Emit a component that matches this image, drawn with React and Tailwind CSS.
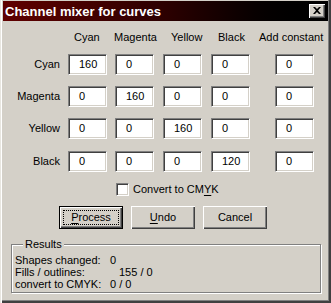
import React from "react";

const F = { fontFamily: '"Liberation Sans", Arial, sans-serif' };

function Field({ value, className = "" }) {
  return (
    <div
      className={
        "h-[21px] w-[39px] bg-white border border-t-[#808080] border-l-[#808080] border-b-white border-r-white shadow-[inset_1px_1px_0_#404040,inset_-1px_-1px_0_#d4d0c8] pl-[10px] flex items-center text-[11px] text-black leading-none " +
        className
      }
    >
      {value}
    </div>
  );
}

function Row({ label, values }) {
  return (
    <div className="flex items-center h-[21px]">
      <div className="w-[60px] text-right text-[11px] text-black leading-none">{label}</div>
      <Field value={values[0]} className="ml-[8px]" />
      <Field value={values[1]} className="ml-[8px]" />
      <Field value={values[2]} className="ml-[9px]" />
      <Field value={values[3]} className="ml-[9px]" />
      <Field value={values[4]} className="ml-[25px]" />
    </div>
  );
}

function Btn({ children, def }) {
  return (
    <div
      className={
        "relative w-[64px] h-[23px] flex items-center justify-center text-[11px] text-black " +
        (def ? "border border-black" : "")
      }
    >
      <div className="absolute inset-0 shadow-[inset_1px_1px_0_#fff,inset_-1px_-1px_0_#404040,inset_-2px_-2px_0_#808080]" />
      {def && (
        <div className="absolute left-[3px] top-[3px] right-[3px] bottom-[3px] border border-dotted border-black" />
      )}
      <span className="relative">{children}</span>
    </div>
  );
}

export default function App() {
  return (
    <div
      className="relative w-[331px] h-[303px] bg-[#d4d0c8] shadow-[inset_1px_0_0_#e8e6e0,inset_2px_0_0_#fff,inset_-1px_-1px_0_#404040,inset_-2px_-2px_0_#404040,inset_-3px_-3px_0_#808080] overflow-hidden select-none"
      style={F}
    >
      {/* Title bar */}
      <div className="ml-[3px] mr-[3px] mt-[1px] h-[20px] bg-gradient-to-r from-[#600000] via-[#2c0000] to-black flex items-center justify-between pl-[2px] pr-[3px]">
        <span className="text-white font-bold text-[13px] leading-none">Channel mixer for curves</span>
        <div className="w-[16px] h-[14px] bg-[#d4d0c8] shadow-[inset_1px_1px_0_#fff,inset_-1px_-1px_0_#404040,inset_-2px_-2px_0_#808080] flex items-center justify-center">
          <svg width="8" height="7" viewBox="0 0 8 7" className="mb-[1px]">
            <path d="M0 0h2l2 2 2-2h2L5 3.5 8 7H6L4 5 2 7H0l3-3.5z" fill="#000" />
          </svg>
        </div>
      </div>

      {/* Headers */}
      <div className="flex items-center h-[13px] mt-[10px] text-[11px] text-black leading-none">
        <div className="w-[74px] shrink-0" />
        <div className="w-[40px] shrink-0">Cyan</div>
        <div className="w-[57px] shrink-0">Magenta</div>
        <div className="w-[47px] shrink-0">Yellow</div>
        <div className="w-[41px] shrink-0">Black</div>
        <div className="shrink-0">Add constant</div>
      </div>

      {/* Rows */}
      <div className="flex flex-col mt-[10px] gap-[11px]">
        <Row label="Cyan" values={["160", "0", "0", "0", "0"]} />
        <Row label="Magenta" values={["0", "160", "0", "0", "0"]} />
        <Row label="Yellow" values={["0", "0", "160", "0", "0"]} />
        <div className="mt-[1px]">
          <Row label="Black" values={["0", "0", "0", "120", "0"]} />
        </div>
      </div>

      {/* Checkbox */}
      <div className="flex items-center pl-[116px] mt-[11px] h-[13px]">
        <div className="w-[13px] h-[13px] bg-white border border-t-[#808080] border-l-[#808080] border-b-white border-r-white shadow-[inset_1px_1px_0_#404040,inset_-1px_-1px_0_#d4d0c8]" />
        <span className="ml-[4px] text-[11px] text-black leading-none">
          Convert to CM<u className="underline-offset-[2px]">Y</u>K
        </span>
      </div>

      {/* Buttons */}
      <div className="flex pl-[59px] gap-[8px] mt-[10px]">
        <Btn def>
          <u className="underline-offset-[2px]">P</u>rocess
        </Btn>
        <Btn>
          <u className="underline-offset-[2px]">U</u>ndo
        </Btn>
        <Btn>Cancel</Btn>
      </div>

      {/* Results */}
      <div className="relative ml-[11px] mt-[15px] w-[310px] h-[49px] border border-[#808080] shadow-[inset_1px_1px_0_#fff,1px_1px_0_#fff] pl-[3px] pt-[9px]">
        <span className="absolute left-[11px] top-[-7px] bg-[#d4d0c8] px-[2px] text-[11px] leading-[13px] text-black">
          Results
        </span>
        <div className="grid grid-cols-[95px_1fr] text-[11px] leading-[12px] text-black">
          <span>Shapes changed:</span>
          <span>0</span>
          <span>Fills / outlines:</span>
          <span className="pl-[9px]">155 / 0</span>
          <span>convert to CMYK:</span>
          <span>0 / 0</span>
        </div>
      </div>
    </div>
  );
}
